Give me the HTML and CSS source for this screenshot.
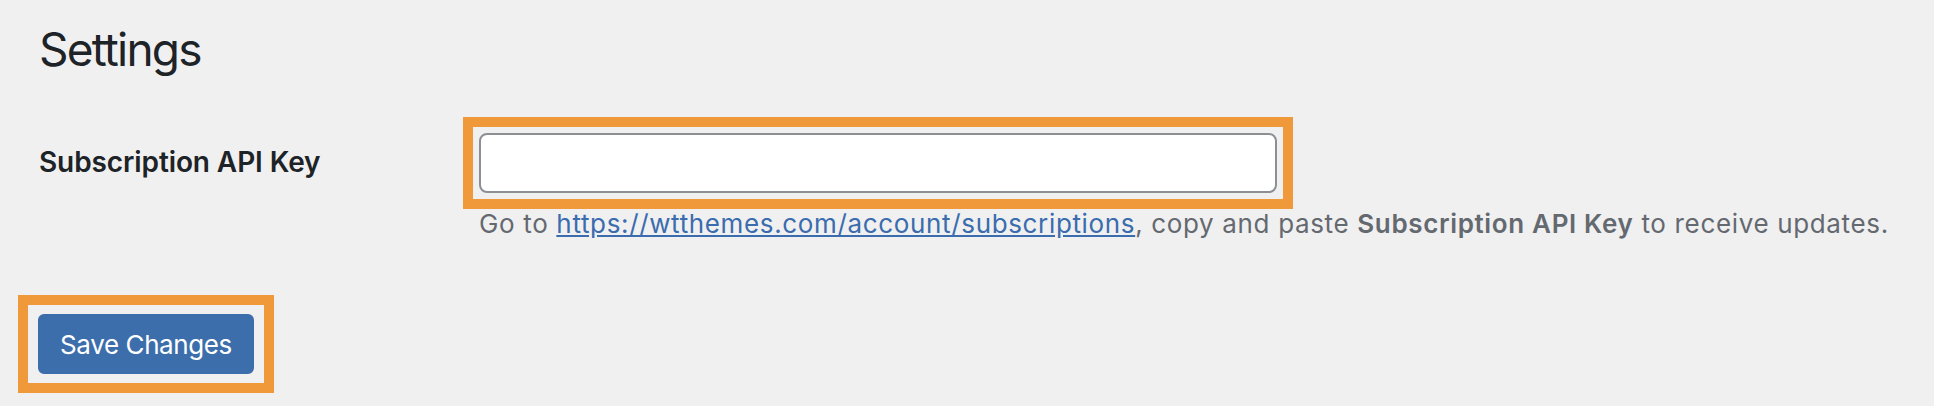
FILE: index.html
```html
<!DOCTYPE html>
<html lang="en">
<head>
    <meta charset="UTF-8">
    <meta name="viewport" content="width=device-width, initial-scale=1.0">
    <title>Settings</title>
    <link rel="stylesheet" href="styles.css">
</head>
<body>
    <div class="wrap">
        <h1>Settings</h1>

        <!-- Fila de la clave API -->
        <form class="settings-form">
            <div class="form-row">
                <label class="field-label" for="api-key">Subscription API Key</label>
                <div class="field">
                    <div class="highlight">
                        <input type="text" id="api-key" class="regular-text">
                    </div>
                    <p class="description">
                        Go to <a href="#">https://wtthemes.com/account/subscriptions</a>, copy and paste <strong>Subscription API Key</strong> to receive updates.
                    </p>
                </div>
            </div>

            <div class="submit highlight">
                <button type="button" class="button-primary">Save Changes</button>
            </div>
        </form>
    </div>
</body>
</html>
```

FILE: styles.css
```css
body {
    font-family: Inter, "Liberation Sans", sans-serif;
    background-color: #f0f0f1;
    color: #1d2327;
    margin: 0;
    padding: 0;
}
.wrap {
    padding-left: 39px;
}
h1 {
    font-size: 46px;
    font-weight: 400;
    line-height: 60px;
    letter-spacing: -1.8px;
    margin: 19px 0 38px 0;
}
.form-row {
    display: flex;
}
.field-label {
    width: 424px;
    flex-shrink: 0;
    padding-top: 27px;
    font-size: 28px;
    font-weight: 600;
    line-height: 36px;
    letter-spacing: -0.1px;
}
.highlight {
    border: 10px solid #f0993a;
    padding: 6px;
    width: fit-content;
}
.regular-text {
    display: block;
    box-sizing: border-box;
    width: 798px;
    height: 60px;
    border: 2px solid #8c8f94;
    border-radius: 8px;
    background-color: #ffffff;
    font-family: inherit;
    font-size: 28px;
    padding: 0 16px;
}
.description {
    margin: 0;
    padding-left: 16px;
    font-size: 26px;
    line-height: 30px;
    letter-spacing: 0.65px;
    color: #646970;
}
.description a {
    color: #3a6cae;
    text-decoration: underline;
}
.description strong {
    font-weight: 600;
}
.submit {
    margin-top: 56px;
    margin-left: -21px;
    padding: 9px 10px;
}
.button-primary {
    display: block;
    width: 216px;
    height: 60px;
    background-color: #3c6eab;
    border: 2px solid #3c6eab;
    border-radius: 6px;
    color: #ffffff;
    font-family: inherit;
    font-size: 26px;
    letter-spacing: -0.4px;
    cursor: pointer;
}
```
